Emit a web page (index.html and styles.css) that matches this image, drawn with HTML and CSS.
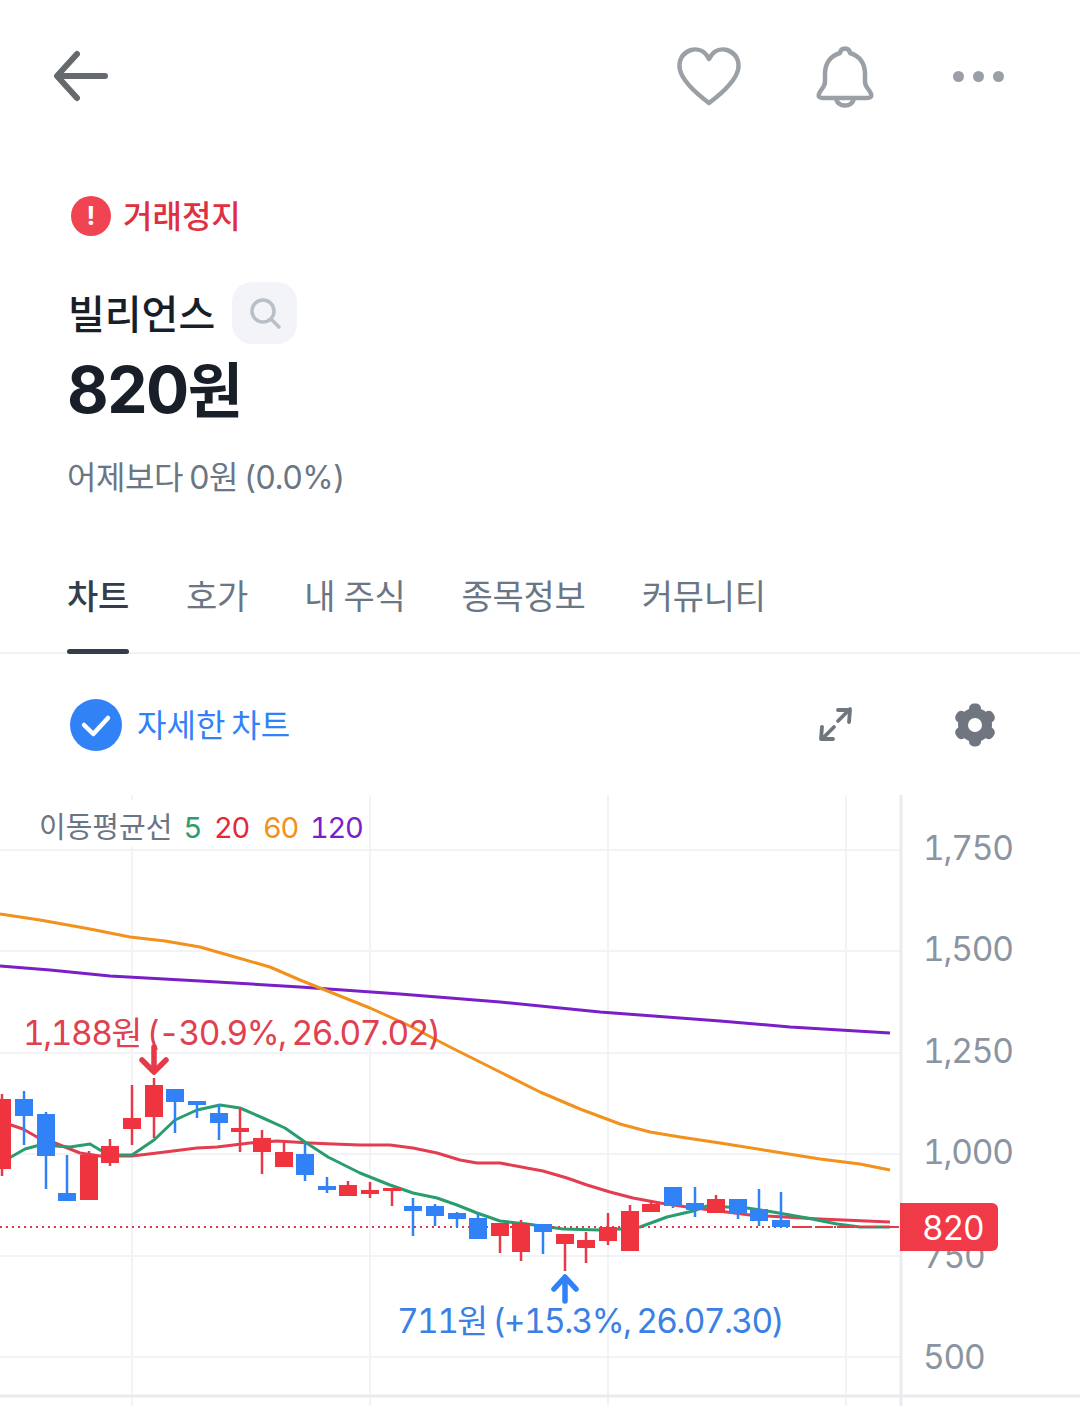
FILE: index.html
```html
<!DOCTYPE html>
<html lang="ko">
<head>
  <meta charset="UTF-8" />
  <meta name="viewport" content="width=device-width, initial-scale=1.0"/>
  <title>빌리언스</title>
  <link rel="stylesheet" href="styles.css">
</head>
<body>
  <div class="page">
    <header class="topbar">
      <svg class="ico-back" width="60" height="56" viewBox="0 0 60 56"><path d="M52 28H5M24 6L4 28l20 22" /></svg>
      <div class="topbar-right">
        <svg class="ico-line" width="66" height="62" viewBox="0 0 66 62"><path d="M33 14C29 6 22 3 15 5 6 8 2 16 4 25c3 12 17 24 29 33 12-9 26-21 29-33 2-9-2-17-11-20-7-2-14 1-18 9z" /></svg>
        <svg class="ico-line ico-bell" width="60" height="64" viewBox="0 0 60 64"><path d="M25 9c1-6 9-6 10 0 10 3 15 11 15 21v8c0 5 5 8 6 12 1 3-1 4-4 4H8c-3 0-5-1-4-4 1-4 6-7 6-12v-8c0-10 5-18 15-21zM21 54c1 10 17 10 18 0" /></svg>
        <div class="dots"><i></i><i></i><i></i></div>
      </div>
    </header>

    <div class="status">
      <span class="status-badge">!</span>
      <span class="status-text">거래정지</span>
    </div>

    <div class="name-row">
      <h1>빌리언스</h1>
      <button class="search-btn">
        <svg width="34" height="34" viewBox="0 0 34 34"><circle cx="15" cy="15" r="11" /><path d="M24 24l7 7" /></svg>
      </button>
    </div>
    <div class="price">820<span class="price-unit">원</span></div>
    <div class="change">어제보다 0원 (0.0%)</div>

    <nav class="tabs">
      <a class="tab active">차트</a>
      <a class="tab">호가</a>
      <a class="tab">내 주식</a>
      <a class="tab">종목정보</a>
      <a class="tab">커뮤니티</a>
    </nav>

    <div class="chart-tools">
      <div class="detail-check">
        <svg width="52" height="52" viewBox="0 0 52 52"><circle cx="26" cy="26" r="26" fill="#3182f6" /><path d="M14 26l9.300 9L38 19" fill="none" stroke="#fff" stroke-width="4.500" stroke-linecap="round" stroke-linejoin="round" /></svg>
        <span class="detail-text">자세한 차트</span>
      </div>
      <div class="tool-icons">
        <svg class="ico-expand" width="38" height="38" viewBox="0 0 38 38"><path d="M21 15L33 3M21 4h12l-1 12M17 21L5 33M5 21l-1 12h12" /></svg>
        <svg width="42" height="44" viewBox="-21 -22 42 44" fill="#6f7680">
          <circle r="17" />
          <rect x="-6" y="-21.5" width="12" height="43" rx="5" />
          <rect x="-6" y="-21.5" width="12" height="43" rx="5" transform="rotate(60)" />
          <rect x="-6" y="-21.5" width="12" height="43" rx="5" transform="rotate(120)" />
          <circle r="7" fill="#fff" />
        </svg>
      </div>
    </div>

    <!-- viewBox는 화면 좌표 그대로 -->
    <svg class="chart" width="1080" height="611" viewBox="0 795 1080 611">
      <g class="grid">
        <path d="M0 850H900M0 951H900M0 1053H900M0 1154H900M0 1256H900M0 1357H900" />
        <path d="M132 795V1406M370 795V1406M608 795V1406M846 795V1406" />
      </g>
      <path class="axis" d="M901 795V1406M0 1396H1080" />

      <rect x="30" y="800" width="339" height="47" fill="#fff" />
      <text class="legend" x="39" y="838">이동평균선<tspan class="c-green" x="183.5">5</tspan><tspan class="c-red" x="214">20</tspan><tspan class="c-orange" x="263">60</tspan><tspan class="c-purple" x="310">120</tspan></text>

      <path class="ma ma120" d="M0 966L50 970 110 976 200 981 300 987 400 994 500 1002 600 1012 720 1021 790 1027 890 1033" />
      <path class="ma ma60" d="M0 914L40 920 90 929 130 937 165 941 200 947 235 957 270 967 300 980 330 992 370 1008 410 1026 450 1047 500 1072 540 1092 580 1109 620 1124 650 1132 680 1137 720 1143 770 1151 820 1159 860 1164 890 1170" />
      <path class="ma ma20" d="M0 1122L11 1125 23 1129 37 1137 55 1143 80 1153 100 1156 132 1156 157 1153 197 1148 217 1147 250 1143 277 1141 310 1143 333 1144 360 1145 390 1145 413 1148 437 1153 460 1160 477 1163 500 1163 543 1171 567 1178 587 1185 610 1192 633 1198 660 1203 687 1207 750 1215 820 1219 890 1222" />
      <path class="ma ma5" d="M0 1161L11 1157 25 1149 40 1145 55 1146 70 1147 90 1144 100 1150 117 1155 132 1155 154 1140 175 1120 197 1110 220 1105 240 1108 263 1118 285 1128 305 1142 328 1157 360 1173 390 1185 413 1193 437 1198 457 1205 477 1213 500 1221 527 1224 563 1229 600 1230 620 1229 640 1227 667 1217 693 1211 707 1206 747 1208 773 1212 807 1218 837 1224 860 1227 890 1227" />

      <path class="price-line" d="M0 1227H900" />

      <!-- 양봉 -->
      <path class="wick up" d="M2 1094V1176M89 1151V1200M110 1139V1166M132 1085V1145M154 1078V1138M240 1108V1152M262 1130V1174M284 1140V1167M348 1181V1196M370 1182V1198M392 1188V1206M500 1223V1253M521 1220V1261M565 1234V1271M586 1232V1263M608 1213V1245M630 1205V1251M651 1201V1212M716 1195V1213" />
      <path class="body up" d="M-7 1099h18v70h-18zM80 1155h18v45h-18zM101 1146h18v17h-18zM123 1118h18v11h-18zM145 1085h18v32h-18zM231 1128h18v4h-18zM253 1138h18v14h-18zM275 1152h18v15h-18zM339 1185h18v11h-18zM361 1190h18v4h-18zM383 1188h18v3h-18zM491 1223h18v13h-18zM512 1223h18v29h-18zM556 1234h18v10h-18zM577 1240h18v8h-18zM599 1227h18v14h-18zM621 1211h18v40h-18zM642 1204h18v8h-18zM707 1199h18v14h-18z" />
      <!-- 음봉 -->
      <path class="wick down" d="M24 1091V1145M46 1112V1189M67 1155V1201M175 1089V1133M197 1101V1118M219 1104V1140M305 1143V1181M327 1177V1193M413 1198V1236M435 1204V1226M457 1212V1227M478 1214V1239M543 1224V1254M673 1187V1208M695 1187V1217M738 1199V1219M759 1189V1226M781 1192V1227" />
      <path class="body down" d="M15 1099h18v17h-18zM37 1114h18v42h-18zM58 1193h18v8h-18zM166 1089h18v13h-18zM188 1101h18v4h-18zM210 1113h18v10h-18zM296 1154h18v21h-18zM318 1186h18v4h-18zM404 1206h18v5h-18zM426 1206h18v10h-18zM448 1213h18v6h-18zM469 1218h18v21h-18zM534 1224h18v8h-18zM664 1187h18v19h-18zM686 1203h18v7h-18zM729 1199h18v15h-18zM750 1209h18v12h-18zM772 1220h18v7h-18z" />
      <path class="flat" d="M793 1227h18M815 1227h18M837 1227h18M859 1227h18M881 1227h18" />

      <text class="mark c-mark-red" x="23" y="1045">1,188원 (-30.9%, 26.07.02)</text>
      <path class="arrow arrow-red" d="M154 1047V1071M142 1060l12 12 12-12" />
      <path class="arrow arrow-blue" d="M565 1301V1278M554 1289l11-12 11 12" />
      <text class="mark mark-tight c-mark-blue" x="397" y="1333">711원 (+15.3%, 26.07.30)</text>

      <text class="tick" x="923" y="860">1,750</text>
      <text class="tick" x="923" y="961">1,500</text>
      <text class="tick" x="923" y="1063">1,250</text>
      <text class="tick" x="923" y="1164">1,000</text>
      <text class="tick" x="923" y="1268">750</text>
      <text class="tick" x="923" y="1369">500</text>

      <path class="price-tag" d="M900 1203H992a6 6 0 0 1 6 6V1245a6 6 0 0 1-6 6H900z" />
      <text class="tag-text" x="922" y="1240">820</text>
    </svg>
  </div>
</body>
</html>
```

FILE: styles.css
```css
body {
  margin: 0;
  background: #fff;
  font-family: "Inter", "Noto Sans CJK KR", sans-serif;
  color: #191f28;
}

.page {
  width: 1080px;
  height: 1406px;
  overflow: hidden;
}

.topbar {
  display: flex;
  justify-content: space-between;
  align-items: center;
  height: 56px;
  padding: 48px 76px 0 53px;
}

.topbar-right {
  display: flex;
  align-items: center;
  gap: 72px;
}

.ico-back path {
  fill: none;
  stroke: #666a6e;
  stroke-width: 6;
  stroke-linecap: round;
  stroke-linejoin: round;
}

.ico-line path {
  fill: none;
  stroke: #9aa0a6;
  stroke-width: 4.5;
  stroke-linejoin: round;
  stroke-linecap: round;
}

.ico-bell {
  margin-left: 1px;
  margin-right: 6px;
}

.dots {
  display: flex;
  gap: 9px;
}

.dots i {
  width: 11px;
  height: 11px;
  border-radius: 50%;
  background: #999fa5;
}

.status {
  display: flex;
  align-items: center;
  gap: 12px;
  margin: 88px 0 0 71px;
  height: 48px;
  font-size: 32px;
  color: #e03040;
}

.status-text {
  padding-bottom: 4px;
  font-weight: 500;
}

.status-badge {
  width: 40px;
  height: 40px;
  border-radius: 50%;
  background: #f04452;
  color: #fff;
  font-size: 26px;
  font-weight: 700;
  line-height: 40px;
  text-align: center;
}

.name-row {
  display: flex;
  align-items: center;
  gap: 17px;
  margin: 42px 0 0 68px;
  height: 62px;
}

.name-row h1 {
  margin: 0;
  padding-bottom: 2px;
  font-size: 40px;
  font-weight: 500;
}

.search-btn {
  width: 65px;
  height: 62px;
  padding: 0;
  border: none;
  border-radius: 20px;
  background: #f2f4f7;
  display: flex;
  align-items: center;
  justify-content: center;
}

.search-btn svg {
  fill: none;
  stroke: #b9bfc7;
  stroke-width: 3.5;
  stroke-linecap: round;
}

.price {
  margin: 8px 0 0 67px;
  height: 76px;
  line-height: 76px;
  font-size: 64px;
  font-weight: 700;
  letter-spacing: -1.5px;
}

.price-unit {
  font-size: 60px;
}

.change {
  margin: 30px 0 0 67px;
  height: 40px;
  line-height: 40px;
  font-size: 32px;
  letter-spacing: -0.4px;
  word-spacing: -2.5px;
  color: #6b7684;
}

.tabs {
  display: flex;
  align-items: flex-start;
  gap: 56px;
  margin-top: 58px;
  padding-left: 67px;
  height: 96px;
  border-bottom: 2px solid #f0f1f3;
}

.tab {
  height: 98px;
  line-height: 82px;
  font-size: 34px;
  letter-spacing: -0.25px;
  word-spacing: -1px;
  color: #6b7684;
  box-sizing: border-box;
}

.tab.active {
  position: relative;
  margin-right: 1px;
  color: #333d4b;
  font-weight: 500;
}

.tab.active::after {
  content: "";
  position: absolute;
  left: 0;
  right: 0;
  bottom: 0;
  height: 5px;
  border-radius: 3px;
  background: #333d4b;
}

.chart-tools {
  display: flex;
  justify-content: space-between;
  align-items: center;
  height: 141px;
  padding: 0 84px 0 70px;
}

.detail-check {
  display: flex;
  align-items: center;
  gap: 15px;
  font-size: 32px;
  word-spacing: -3px;
  color: #3182f6;
}

.detail-text {
  padding-bottom: 4px;
}

.tool-icons {
  display: flex;
  align-items: center;
  gap: 99px;
}

.ico-expand path {
  fill: none;
  stroke: #6f7680;
  stroke-width: 3.8;
  stroke-linecap: round;
  stroke-linejoin: round;
}

.chart {
  display: block;
}

.grid path {
  fill: none;
  stroke: #f2f3f5;
  stroke-width: 2;
}

.axis {
  fill: none;
  stroke: #e9ebee;
  stroke-width: 3;
}

.legend {
  font-size: 29px;
  font-variant-numeric: tabular-nums;
  fill: #6b7684;
}

.legend tspan {
  letter-spacing: -1.3px;
}

.c-green { fill: #2a9d6f; }
.c-red { fill: #e42939; }
.c-orange { fill: #f2911b; }
.c-purple { fill: #7a1fc7; }
.c-mark-red { fill: #e0404f; }
.c-mark-blue { fill: #3b80e4; }

.ma {
  fill: none;
  stroke-width: 3;
  stroke-linejoin: round;
}

.ma5 { stroke: #2a9d6f; }
.ma20 { stroke: #e23d50; }
.ma60 { stroke: #f2911b; }
.ma120 { stroke: #7a1fc7; }

.price-line {
  fill: none;
  stroke: #e0394a;
  stroke-width: 2;
  stroke-dasharray: 2 4;
}

.wick {
  fill: none;
  stroke-width: 2.5;
}

.wick.up { stroke: #e63a48; }
.wick.down { stroke: #3182f6; }
.body.up { fill: #f0343f; }
.body.down { fill: #3182f6; }

.flat {
  fill: none;
  stroke: #e63a48;
  stroke-width: 2;
}

.mark {
  font-size: 33.5px;
  font-variant-numeric: tabular-nums;
  letter-spacing: -1.5px;
  word-spacing: -1.5px;
}

.mark-tight {
  letter-spacing: -1.62px;
}

.arrow {
  fill: none;
  stroke-width: 5.5;
  stroke-linecap: round;
  stroke-linejoin: round;
}

.arrow-red { stroke: #e63a48; }
.arrow-blue { stroke: #3182f6; }

.tick {
  font-size: 33.5px;
  font-variant-numeric: tabular-nums;
  letter-spacing: -1.2px;
  fill: #8b95a1;
}

.price-tag {
  fill: #f03a47;
}

.tag-text {
  font-size: 33.5px;
  font-variant-numeric: tabular-nums;
  letter-spacing: -1.2px;
  fill: #fff;
}
```
